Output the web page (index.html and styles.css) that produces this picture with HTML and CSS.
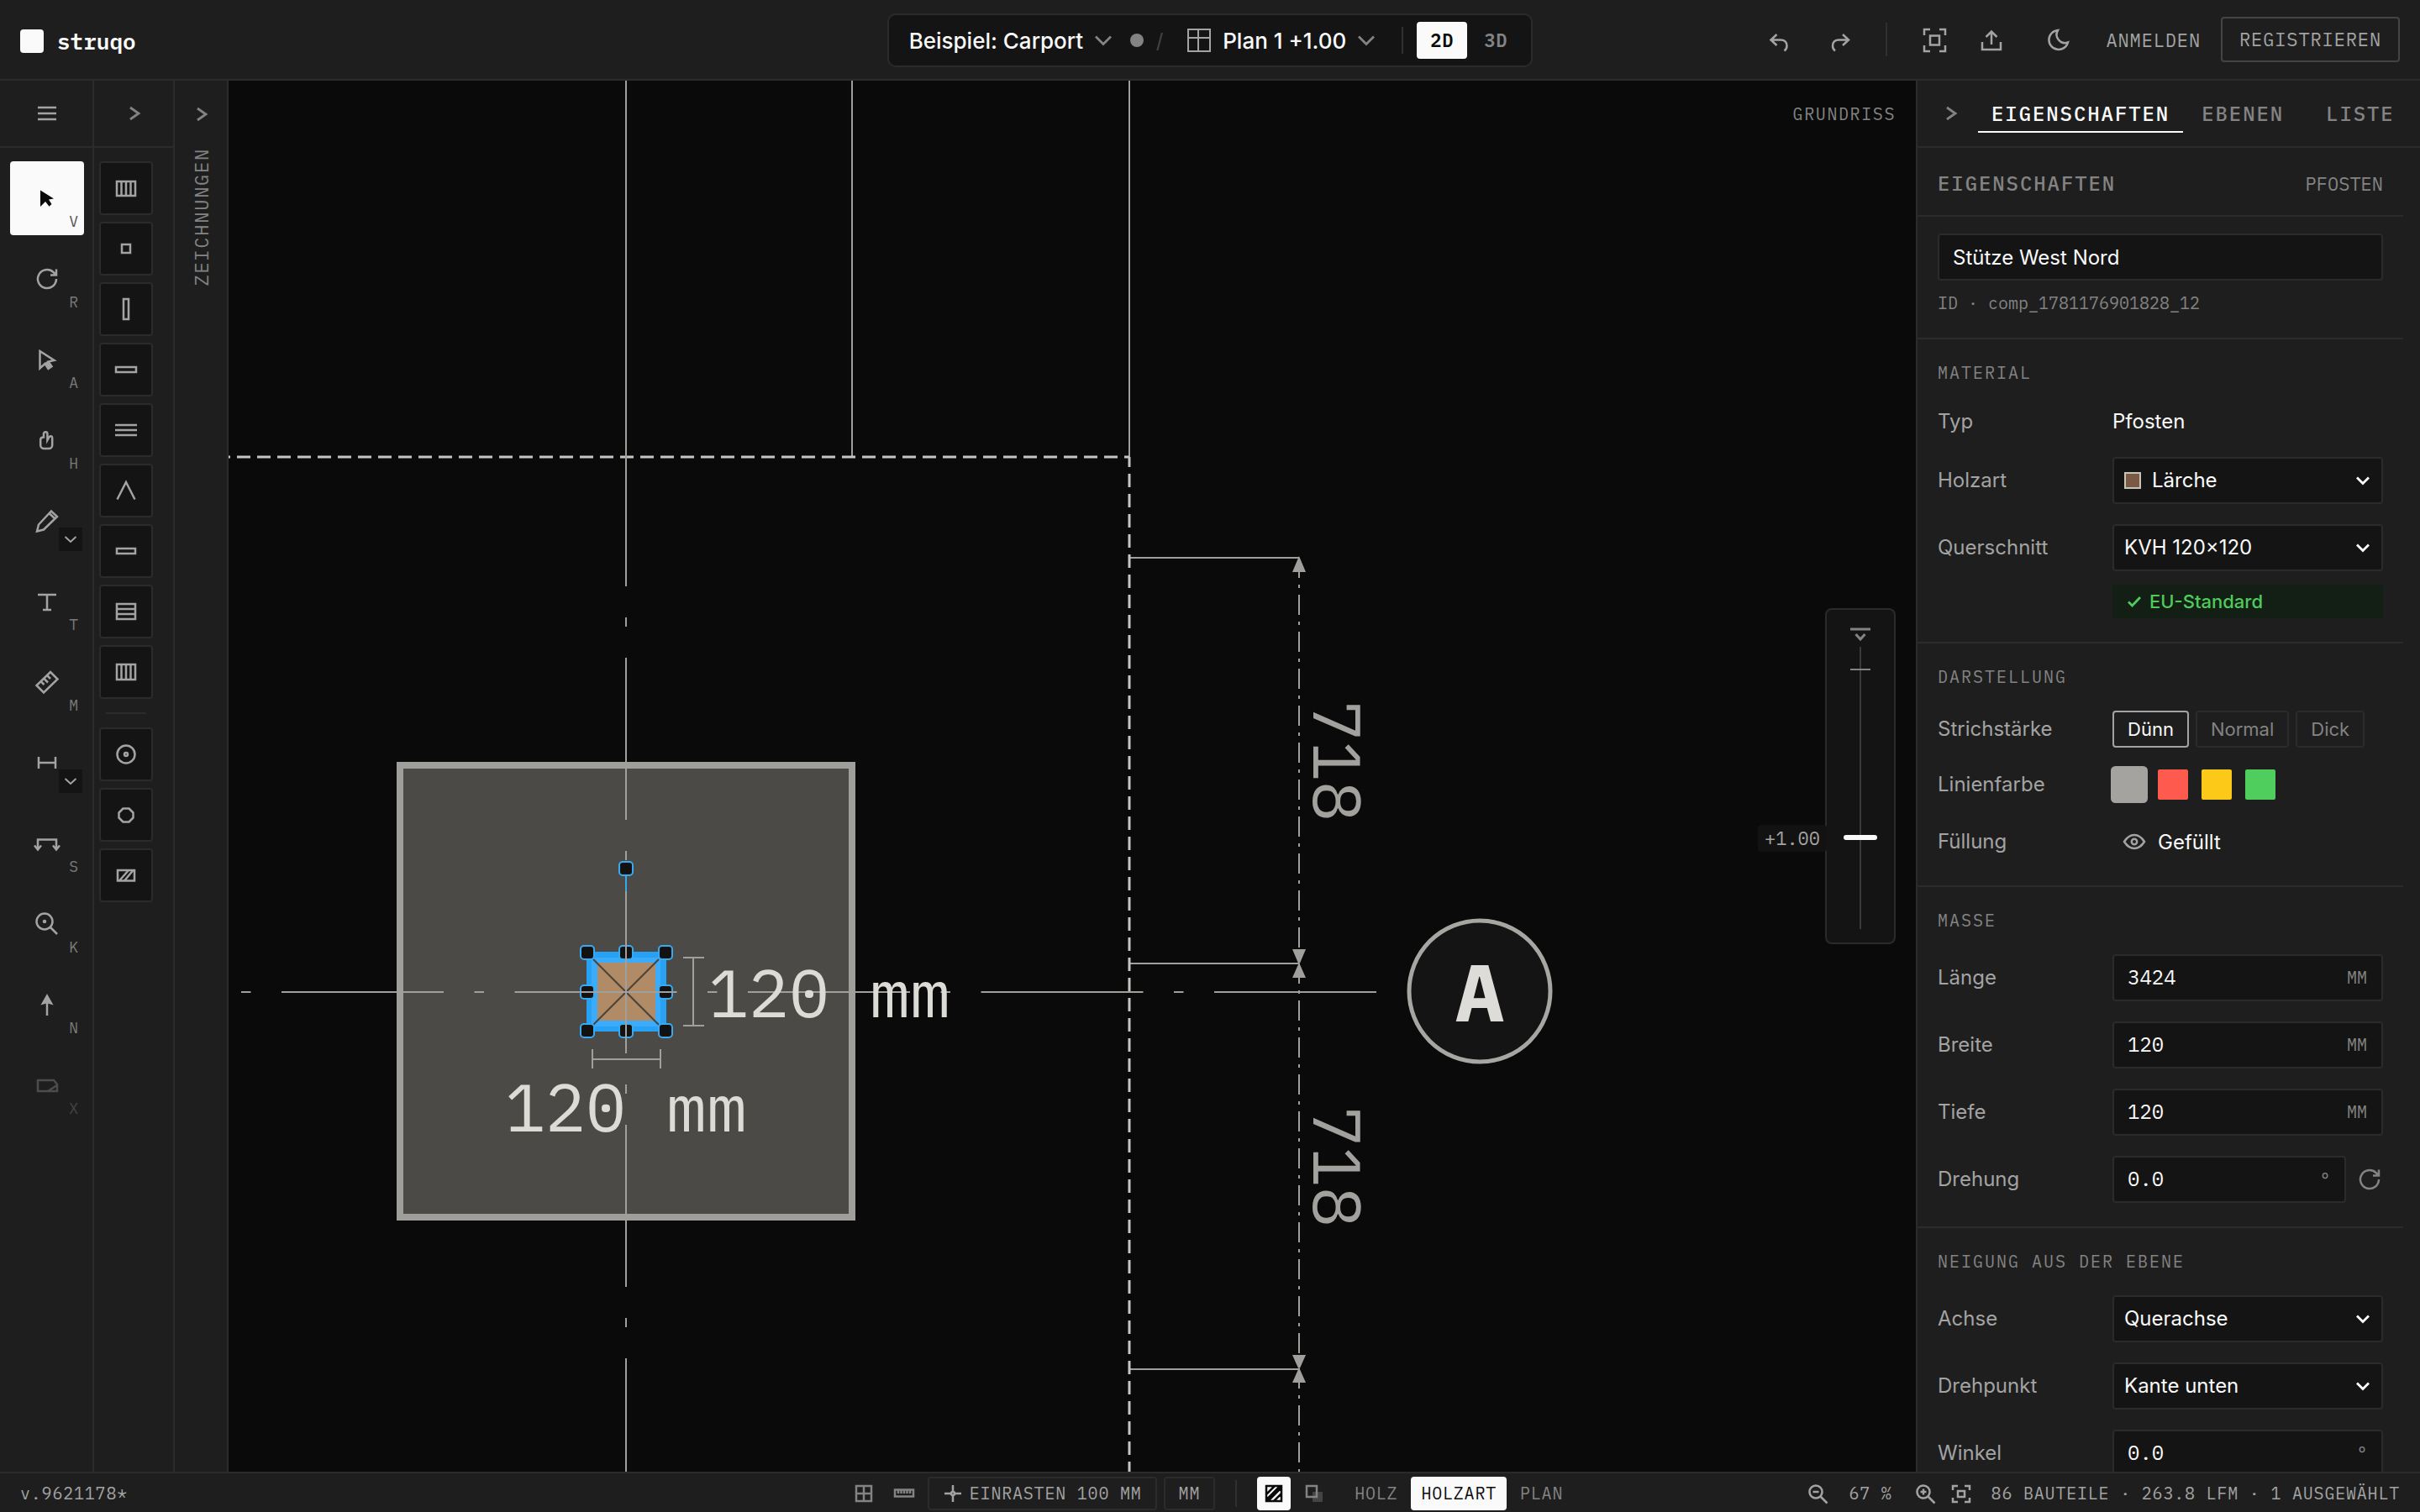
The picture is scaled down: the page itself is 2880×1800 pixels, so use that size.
FILE: index.html
```html
<!DOCTYPE html>
<html lang="de">
<head>
<meta charset="utf-8">
<title>struqo – Beispiel: Carport</title>
<link rel="stylesheet" href="styles.css">
</head>
<body>
<div class="app">
  <header class="topbar">
    <a class="brand" href="#"><span class="brand-mark"></span>struqo</a>
    <div class="project">
      <button class="project-btn" type="button">Beispiel: Carport
        <svg class="chev" viewBox="0 0 24 24"><path d="M3 7.500l9 9 9-9"/></svg></button>
      <span class="save-dot"></span>
      <span class="slash">/</span>
      <button class="project-btn" type="button">
        <svg class="icon plan-icon" viewBox="0 0 32 32"><path d="M3 3h26v26H3zM3 13h26M15 3v26"/></svg>Plan 1 +1.00
        <svg class="chev" viewBox="0 0 24 24"><path d="M3 7.500l9 9 9-9"/></svg></button>
      <span class="rule"></span>
      <div class="views">
        <button class="view-btn is-active" type="button">2D</button>
        <button class="view-btn" type="button">3D</button>
      </div>
    </div>
    <div class="actions">
      <div class="history">
        <button class="icon-btn" type="button" aria-label="Rückgängig"><svg class="icon" viewBox="0 0 32 32"><path d="M14.500 10L7.500 16.500l7 6.500M8 16.500h11c5 0 7.500 3 7.500 7 0 3-1.500 5-3 6"/></svg></button>
        <button class="icon-btn" type="button" aria-label="Wiederholen"><svg class="icon" viewBox="0 0 32 32"><path d="M19 10l7 6.500-7 6.500M25.500 16.500h-11c-5 0-7.500 3-7.500 7 0 3 1.500 5 3 6"/></svg></button>
      </div>
      <span class="rule tall"></span>
      <div class="exports">
        <button class="icon-btn" type="button" aria-label="Einpassen"><svg class="icon" viewBox="0 0 32 32"><path d="M4 11V4h7M22 4h7v7M29 23v7h-7M11 30H4v-7M11 11.500h11v11H11z"/></svg></button>
        <button class="icon-btn" type="button" aria-label="Exportieren"><svg class="icon" viewBox="0 0 32 32"><path d="M16 22V7M9.500 13L16 6.500l6.500 6.500M5 19v9h22v-9"/></svg></button>
      </div>
      <button class="icon-btn moon" type="button" aria-label="Dunkelmodus"><svg class="icon" viewBox="0 0 32 32"><path d="M27 19.500A11.500 11.500 0 1 1 15 5a10 10 0 0 0 12 14.500z"/></svg></button>
      <div class="account">
        <a class="login" href="#">ANMELDEN</a>
        <a class="register" href="#">REGISTRIEREN</a>
      </div>
    </div>
  </header>

  <main class="work">
    <nav class="rail tools">
      <div class="rail-head"><button class="rail-btn" type="button" aria-label="Menü"><svg class="icon" viewBox="0 0 32 32"><path d="M5 9h22M5 16h22M5 23h22"/></svg></button></div>
      <div class="tool-list">
        <button class="tool is-active" type="button"><svg class="icon solid" viewBox="0 0 32 32"><path d="M8 6.500L24 16.500l-6 1 3.500 5.500-3 2.800L14 20l-6 6z"/></svg><kbd>V</kbd></button>
        <button class="tool" type="button"><svg class="icon" viewBox="0 0 32 32"><path d="M27 16A11 11 0 1 1 23.500 8L27 11.500M27 4.500v7h-7"/></svg><kbd>R</kbd></button>
        <button class="tool" type="button"><svg class="icon" viewBox="0 0 32 32"><path d="M7.500 6v20.500l6-5.500 4 6 4-2.800-4-5.700 7-1.500zM15 19l5 7"/></svg><kbd>A</kbd></button>
        <button class="tool" type="button"><svg class="icon" viewBox="0 0 32 32"><path d="M12 12.500V8.500a2.200 2.200 0 0 1 4.400 0V16l2-3.500c.6-1 1.300-1.500 2.300-1.300 1 .2 1.500 1 1.500 2V22a4 4 0 0 1-4 4h-6a4 4 0 0 1-4-4v-6.500c0-2 1.500-3 3.800-3z"/></svg><kbd>H</kbd></button>
        <button class="tool" type="button"><svg class="icon" viewBox="0 0 32 32"><path d="M4 28.500l2-8L21 4.500l7 6.500-16 15.500zM18.500 7l7 6.500"/></svg><span class="more"><svg class="more-icon" viewBox="0 0 28 28"><path d="M7.500 11l6.500 6 6.500-6"/></svg></span></button>
        <button class="tool" type="button"><svg class="icon" viewBox="0 0 32 32"><path d="M5 8h22M16 8v18M11 26h10"/></svg><kbd>T</kbd></button>
        <button class="tool" type="button"><svg class="icon" viewBox="0 0 32 32"><path d="M20 4l8.500 8.500L12 28.500 3.500 20zM9 15.500l3.500 3.500M12.500 12l4.500 4.500M16.500 8.500l3.500 3.500"/></svg><kbd>M</kbd></button>
        <button class="tool" type="button"><svg class="icon" viewBox="0 0 32 32"><path d="M6 9v14M26 9v14M6 16h20"/></svg><span class="more"><svg class="more-icon" viewBox="0 0 28 28"><path d="M7.500 11l6.500 6 6.500-6"/></svg></span></button>
        <button class="tool" type="button"><svg class="icon" viewBox="0 0 32 32"><path d="M5 23V11.500h22V23M1 18.500L5 23.500l4-5M23 18.500l4 5 4-5"/></svg><kbd>S</kbd></button>
        <button class="tool" type="button"><svg class="icon" viewBox="0 0 32 32"><circle cx="13" cy="13" r="9.500"/><path d="M20 20l8 8"/><circle cx="13" cy="13" r="1"/></svg><kbd>K</kbd></button>
        <button class="tool" type="button"><svg class="icon" viewBox="0 0 32 32"><path d="M16 14v15"/><path d="M16 5.500l5 9-5-1.500-5 1.500z" fill="currentColor"/></svg><kbd>N</kbd></button>
        <button class="tool" type="button" disabled><svg class="icon" viewBox="0 0 32 32"><path d="M5 10h19l4 5v8H5zM17 23l10-6.500"/></svg><kbd>X</kbd></button>
      </div>
    </nav>

    <nav class="rail parts">
      <div class="rail-head"><button class="rail-btn" type="button" aria-label="Bauteile ausklappen"><svg class="chev" viewBox="0 0 24 24"><path d="M7 5l10 7-10 7"/></svg></button></div>
      <div class="part-list">
        <button class="part" type="button"><svg class="icon" viewBox="0 0 32 32"><path d="M5 8h22v17H5zM10.500 8v17M16 8v17M21.500 8v17"/></svg></button>
        <button class="part" type="button"><svg class="icon" viewBox="0 0 32 32"><path d="M11 11h10v10H11z"/></svg></button>
        <button class="part" type="button"><svg class="icon" viewBox="0 0 32 32"><path d="M13 4h6v24h-6z"/></svg></button>
        <button class="part" type="button"><svg class="icon" viewBox="0 0 32 32"><path d="M4 13h24v6H4z"/></svg></button>
        <button class="part" type="button"><svg class="icon" viewBox="0 0 32 32"><path d="M3 10h26M3 16h26M3 22h26"/></svg></button>
        <button class="part" type="button"><svg class="icon" viewBox="0 0 32 32"><path d="M5.500 26.500L16 6l10.500 20.500"/></svg></button>
        <button class="part" type="button"><svg class="icon" viewBox="0 0 32 32"><path d="M5 13h22v6H5z"/></svg></button>
        <button class="part" type="button"><svg class="icon" viewBox="0 0 32 32"><path d="M5 7h22v18H5zM5 13h22M5 19h22"/></svg></button>
        <button class="part" type="button"><svg class="icon" viewBox="0 0 32 32"><path d="M5 7h22v18H5zM10.500 7v18M16 7v18M21.500 7v18"/></svg></button>
        <hr class="part-rule">
        <button class="part" type="button"><svg class="icon" viewBox="0 0 32 32"><circle cx="16" cy="16" r="10.500"/><circle cx="16" cy="16" r="2"/></svg></button>
        <button class="part" type="button"><svg class="icon" viewBox="0 0 32 32"><path d="M12.500 8.500h7l5 5v6l-5 5h-7l-5-5v-6z" stroke-linejoin="round"/></svg></button>
        <button class="part" type="button"><svg class="icon" viewBox="0 0 32 32"><path d="M6 10h20v12.500H6zM8 22.500L19 10M14 22.500L24.500 10"/></svg></button>
      </div>
    </nav>

    <aside class="rail drawings">
      <button class="rail-btn drawings-btn" type="button" aria-label="Zeichnungen ausklappen"><svg class="chev" viewBox="0 0 24 24"><path d="M7 5l10 7-10 7"/></svg></button>
      <span class="drawings-label">ZEICHNUNGEN</span>
    </aside>

    <section class="canvas">
      <svg class="drawing" role="img" aria-label="Grundriss">
        <g transform="translate(-272 -96)">
          <g class="thin">
            <path d="M745 96V544M1014 96V544M1344 96V544"/>
            <path d="M1344 664H1546M1344 1147H1546M1344 1630H1546"/>
          </g>
          <path class="outline" d="M272 544H1344" stroke-dashoffset="14"/>
          <path class="outline" d="M1344 544V1760" stroke-dashoffset="4"/>
          <g class="chain"><path d="M1546 664V1147"/><path d="M1546 1147V1629"/><path d="M1546 1629V1760"/></g>
          <path class="arrows" d="M1546 662l8 19h-16zM1546 1149l8-19h-16zM1546 1146l8 18h-16zM1546 1631l8-18h-16zM1546 1628l8 18h-16z"/>
          <rect class="footing" x="476" y="911" width="538" height="538"/>
          <path class="link" d="M745 1034V1134"/>
          <rect x="698" y="1133" width="95" height="95" fill="#27a1f3"/>
          <rect x="704" y="1140" width="82" height="82" fill="#3cabfa"/>
          <rect x="711" y="1146" width="69" height="69" fill="#b08b66"/>
          <path class="cross" d="M706 1142L784 1220M784 1142L706 1220"/>
          <g class="handles">
            <rect x="737" y="1026" width="16" height="16" rx="4"/>
            <rect x="691" y="1126" width="16" height="16" rx="4"/><rect x="737" y="1126" width="16" height="16" rx="4"/><rect x="784" y="1126" width="16" height="16" rx="4"/>
            <rect x="691" y="1173" width="16" height="16" rx="4"/><rect x="784" y="1173" width="16" height="16" rx="4"/>
            <rect x="691" y="1219" width="16" height="16" rx="4"/><rect x="737" y="1219" width="16" height="16" rx="4"/><rect x="784" y="1219" width="16" height="16" rx="4"/>
          </g>
          <path class="axis" d="M745 505V1760"/>
          <path class="axis cross-axis" d="M1638 1181H286"/>
          <path class="thin" d="M813 1140H838M813 1221H838M825 1140V1221M705 1249V1272M786 1249V1272M705 1261H786"/>
          <text class="size" x="843" y="1211">120 mm</text>
          <text class="size" x="745" y="1347" text-anchor="middle">120 mm</text>
          <text class="dim" transform="translate(1563 906) rotate(90)" text-anchor="middle">718</text>
          <text class="dim" transform="translate(1563 1389) rotate(90)" text-anchor="middle">718</text>
          <circle class="bubble" cx="1761" cy="1180" r="84"/>
          <text class="axis-name" x="1761" y="1216" text-anchor="middle">A</text>
        </g>
      </svg>
      <span class="canvas-title">GRUNDRISS</span>
      <div class="level">
        <output class="level-value" for="level">+1.00</output>
        <div class="level-panel">
          <svg class="level-top" viewBox="0 0 24 24"><path d="M0 5h24" stroke-width="3"/><path d="M6.500 11l5.500 6 5.500-6" stroke-width="3"/></svg>
          <input id="level" class="level-range" type="range" min="0" max="100" value="32" aria-label="Schnitthöhe">
        </div>
      </div>
    </section>

    <aside class="panel">
      <div class="tabs">
        <button class="rail-btn tabs-toggle" type="button" aria-label="Panel einklappen"><svg class="chev" viewBox="0 0 24 24"><path d="M7 5l10 7-10 7"/></svg></button>
        <button class="tab is-active" type="button">EIGENSCHAFTEN</button>
        <button class="tab" type="button">EBENEN</button>
        <button class="tab" type="button">LISTE</button>
      </div>
      <div class="panel-body">
        <div class="panel-title"><h2>EIGENSCHAFTEN</h2><span>PFOSTEN</span></div>
        <div class="identity">
          <input class="field" type="text" value="Stütze West Nord" aria-label="Name">
          <p>ID · comp_1781176901828_12</p>
        </div>

        <section class="group">
          <h3>MATERIAL</h3>
          <div class="row typ"><span class="label">Typ</span><span class="value">Pfosten</span></div>
          <div class="row"><label class="label" for="wood">Holzart</label>
            <div class="select has-swatch"><span class="wood-swatch"></span><select id="wood"><option>Lärche</option></select><svg class="caret" viewBox="0 0 20 20"><path d="M3 6.500l7 7 7-7"/></svg></div></div>
          <div class="row"><label class="label" for="profile">Querschnitt</label>
            <div class="select"><select id="profile"><option>KVH 120×120</option></select><svg class="caret" viewBox="0 0 20 20"><path d="M3 6.500l7 7 7-7"/></svg></div></div>
          <div class="row badge-row"><span class="badge"><svg class="check" viewBox="0 0 20 20"><path d="M3 10.500l4.500 4.500L17 5"/></svg>EU-Standard</span></div>
        </section>

        <section class="group">
          <h3>DARSTELLUNG</h3>
          <div class="row"><span class="label">Strichstärke</span>
            <div class="weights"><button class="weight is-active" type="button">Dünn</button><button class="weight" type="button">Normal</button><button class="weight" type="button">Dick</button></div></div>
          <div class="row colors-row"><span class="label">Linienfarbe</span>
            <div class="colors"><button class="color grey is-active" type="button" aria-label="Grau"></button><button class="color red" type="button" aria-label="Rot"></button><button class="color yellow" type="button" aria-label="Gelb"></button><button class="color green" type="button" aria-label="Grün"></button></div></div>
          <div class="row fill-row"><span class="label">Füllung</span>
            <button class="fill" type="button"><svg class="icon" viewBox="0 0 32 32"><path d="M4 16c3.500-5.500 7.500-8 12-8s8.500 2.500 12 8c-3.500 5.500-7.500 8-12 8s-8.500-2.500-12-8z"/><circle cx="16" cy="16" r="3.200"/></svg>Gefüllt</button></div>
        </section>

        <section class="group">
          <h3>MASSE</h3>
          <div class="row"><label class="label" for="len">Länge</label><div class="number"><input id="len" type="text" value="3424"><span>MM</span></div></div>
          <div class="row"><label class="label" for="wid">Breite</label><div class="number"><input id="wid" type="text" value="120"><span>MM</span></div></div>
          <div class="row"><label class="label" for="dep">Tiefe</label><div class="number"><input id="dep" type="text" value="120"><span>MM</span></div></div>
          <div class="row"><label class="label" for="rot">Drehung</label>
            <div class="rotation"><div class="number"><input id="rot" type="text" value="0.0"><span>°</span></div>
            <button class="reset" type="button" aria-label="Um 90° drehen"><svg class="icon" viewBox="0 0 32 32"><path d="M27 16A11 11 0 1 1 23.500 8L27 11.500M27 4.500v7h-7"/></svg></button></div></div>
        </section>

        <section class="group">
          <h3>NEIGUNG AUS DER EBENE</h3>
          <div class="row"><label class="label" for="axis">Achse</label><div class="select"><select id="axis"><option>Querachse</option></select><svg class="caret" viewBox="0 0 20 20"><path d="M3 6.500l7 7 7-7"/></svg></div></div>
          <div class="row"><label class="label" for="pivot">Drehpunkt</label><div class="select"><select id="pivot"><option>Kante unten</option></select><svg class="caret" viewBox="0 0 20 20"><path d="M3 6.500l7 7 7-7"/></svg></div></div>
          <div class="row"><label class="label" for="angle">Winkel</label><div class="number"><input id="angle" type="text" value="0.0"><span>°</span></div></div>
        </section>
      </div>
    </aside>
  </main>

  <footer class="status">
    <span>v.9621178*</span>
    <div class="status-mid">
      <button class="st-icon" type="button" aria-label="Raster"><svg class="icon" viewBox="0 0 32 32"><path d="M7 7h18v18H7zM7 16h18M16 7v18"/></svg></button>
      <button class="st-icon" type="button" aria-label="Lineal"><svg class="icon" viewBox="0 0 32 32"><path d="M5 11.500h22v8H5zM9 11v5M12.500 11v5M16 11v5M19.500 11v5M23 11v5"/></svg></button>
      <button class="st-box snap" type="button"><svg class="icon" viewBox="0 0 32 32"><path d="M6 16h7M19 16h7M16 6v7M16 19v7"/><circle cx="16" cy="16" r="2"/></svg>EINRASTEN 100 MM</button>
      <button class="st-box" type="button">MM</button>
      <span class="rule st-rule"></span>
      <button class="st-icon is-active" type="button" aria-label="Schraffur"><svg class="icon" viewBox="0 0 32 32"><path d="M7 7h18v18H7zM7 17L17 7M7 23.500L23.500 7M9 25L25 9M16 25l9-9"/></svg></button>
      <button class="st-icon" type="button" aria-label="Überlagerung"><svg class="icon" viewBox="0 0 32 32"><path d="M14 14h12v12H14z" fill="#444" stroke="none"/><path d="M7 7h12v13H7z"/></svg></button>
      <div class="modes"><button class="mode" type="button">HOLZ</button><button class="mode is-active" type="button">HOLZART</button><button class="mode" type="button">PLAN</button></div>
    </div>
    <div class="status-right">
      <button class="st-zoom" type="button" aria-label="Verkleinern"><svg class="icon" viewBox="0 0 32 32"><circle cx="13" cy="14" r="7.500"/><path d="M18.500 19.500l8 8M9.500 14h7"/></svg></button>
      <span class="zoom-value">67 %</span>
      <button class="st-zoom" type="button" aria-label="Vergrößern"><svg class="icon" viewBox="0 0 32 32"><circle cx="13" cy="14" r="7.500"/><path d="M18.500 19.500l8 8M9.500 14h7M13 10.500v7"/></svg></button>
      <button class="st-zoom fit" type="button" aria-label="Alles zeigen"><svg class="icon" viewBox="0 0 32 32"><path d="M6 12V7h6M20 7h6v5M26 21v5h-6M12 26H6v-5M12 13h8v7h-8z"/></svg></button>
      <span>86 BAUTEILE · 263.8 LFM · 1 AUSGEWÄHLT</span>
    </div>
  </footer>
</div>
</body>
</html>
```

FILE: styles.css
```css
:root {
  --bg: #0a0a0a;
  --surface: #1e1e1e;
  --field: #141414;
  --line: #2b2b2b;
  --muted: #838383;
  --soft: #a3a3a3;
  --white: #fafafa;
  --mono: "IBM Plex Mono", "Liberation Mono", monospace;
  --sans: Inter, "Liberation Sans", sans-serif;
}
* { box-sizing: border-box; }
body { margin: 0; background: var(--bg); color: var(--soft); font-family: var(--sans); font-size: 24px; }
button, input, select, kbd { font: inherit; color: inherit; }
button { margin: 0; padding: 0; border: 0; background: none; letter-spacing: inherit; }
a { color: inherit; text-decoration: none; }
h2, h3, p { margin: 0; font-weight: 400; }
svg { display: block; flex: none; fill: none; stroke: currentColor; stroke-width: 2; }
.icon { width: 32px; height: 32px; stroke-width: 2.500; }
.icon.solid { fill: currentColor; stroke: none; }
.chev { width: 24px; height: 24px; stroke-width: 2.800; }
.rule { width: 2px; height: 32px; background: #303030; }

.app { display: flex; flex-direction: column; height: 100vh; overflow: hidden; }

/* Top bar */
.topbar { flex: none; display: grid; grid-template-columns: 1fr auto 1fr; align-items: center; height: 96px; padding: 0 24px; background: var(--surface); border-bottom: 2px solid var(--line); }
.brand { display: flex; align-items: center; gap: 16px; padding-top: 4px; color: var(--white); font: 600 26px/32px var(--mono); }
.brand-mark { width: 28px; height: 28px; border-radius: 4px; background: var(--white); }
.project { display: flex; align-items: center; height: 64px; margin-top: 2px; padding: 0 12px 0 24px; background: var(--field); border: 2px solid var(--line); border-radius: 10px; }
.project-btn { display: flex; align-items: center; gap: 12px; color: var(--white); font-weight: 500; font-size: 26px; }
.project-btn svg { color: var(--muted); }
.project-btn .plan-icon { color: var(--soft); stroke-width: 2; }
.save-dot { width: 16px; height: 16px; margin: 0 12px 0 20px; border-radius: 50%; background: var(--muted); }
.slash { width: 14px; margin-right: 24px; color: #444; text-align: center; }
.project .rule { margin: 0 16px 0 30px; }
.views { display: flex; gap: 4px; }
.view-btn { width: 60px; height: 44px; border-radius: 4px; color: var(--muted); font: 600 22px/44px var(--mono); letter-spacing: 1px; }
.view-btn.is-active { background: var(--white); color: var(--bg); }
.actions { display: flex; align-items: center; justify-content: flex-end; font-family: var(--mono); font-size: 22px; letter-spacing: 0.04em; }
.history { display: flex; gap: 10px; margin-right: 22px; }
.exports { display: flex; gap: 4px; margin: 0 16px 0 24px; }
.icon-btn { display: flex; align-items: center; justify-content: center; width: 64px; height: 64px; }
.rule.tall { height: 40px; }
.account { display: flex; align-items: center; gap: 24px; margin-left: 24px; }
.register { padding: 0 20px; border: 2px solid #444; border-radius: 4px; line-height: 50px; }

/* Left rails */
.work { flex: 1; display: flex; min-height: 0; }
.rail { flex: none; background: var(--surface); border-right: 2px solid var(--line); }
.rail-head { display: flex; align-items: center; justify-content: center; height: 80px; padding-left: 2px; border-bottom: 2px solid var(--line); }
.tools { width: 112px; }
.parts { width: 96px; }
.drawings { display: flex; flex-direction: column; align-items: center; width: 64px; padding-left: 2px; }
.rail-btn { display: flex; align-items: center; justify-content: center; width: 48px; height: 48px; color: var(--muted); }
.tools .rail-btn { color: var(--soft); }
.tool-list { display: flex; flex-direction: column; gap: 8px; padding: 16px 10px 16px 12px; }
.tool { position: relative; display: flex; align-items: center; justify-content: center; height: 88px; border-radius: 4px; }
.tool.is-active { background: var(--white); color: var(--bg); }
.tool:disabled { color: #4c4c4c; }
.tool kbd { position: absolute; right: 7px; bottom: 6px; color: #7a7a7a; font: 18px/20px var(--mono); }
.tool.is-active kbd { color: #555; }
.tool:disabled kbd { color: #444; }
.more { position: absolute; right: 2px; bottom: 8px; background: var(--field); }
.more-icon { width: 28px; height: 28px; }
.part-list { display: flex; flex-direction: column; gap: 8px; padding: 16px 6px; }
.part { display: flex; align-items: center; justify-content: center; width: 64px; height: 64px; background: var(--field); border: 2px solid var(--line); border-radius: 4px; }
.part-rule { width: 48px; height: 2px; margin: 8px; border: 0; background: var(--line); }
.drawings-btn { height: 80px; }
.drawings-label { color: var(--muted); font: 22px/24px var(--mono); letter-spacing: 0.08em; writing-mode: vertical-rl; transform: rotate(180deg); }

/* Drawing area */
.canvas { position: relative; flex: 1; min-width: 0; overflow: hidden; background: var(--bg); }
.drawing { position: absolute; inset: 0; width: 100%; height: 100%; }
.thin, .axis { stroke: #a19f9c; stroke-width: 2; }
.outline { stroke: #c9c6c1; stroke-width: 3; stroke-dasharray: 16 8; }
.chain { stroke: #a19f9c; stroke-width: 2; stroke-dasharray: 24 8 4 8; }
.arrows { fill: #a19f9c; stroke: none; }
.footing { fill: #4b4a47; }
.link { stroke: #38a8ee; stroke-width: 2; }
.drawing rect { stroke: none; }
.drawing .footing { stroke: #a09e9a; stroke-width: 8; }
.cross { stroke: #4c443c; stroke-width: 2; }
.drawing .handles rect { fill: #121212; stroke: #3aaaf0; stroke-width: 2; }
.axis { stroke-dasharray: 193 37 11 37; }
.cross-axis { stroke-dasharray: 193 36.500 11.500 36.500; }
.drawing text { stroke: none; font-family: var(--mono); font-size: 80px; }
.size { fill: #dddbd6; }
.dim { fill: #a3a19e; }
.bubble { fill: var(--field); stroke: #a8a6a3; stroke-width: 5; }
.drawing .axis-name { fill: #dedcd8; font-size: 96px; font-weight: 700; }
.canvas-title { position: absolute; top: 28px; right: 24px; color: var(--muted); font: 20px/24px var(--mono); letter-spacing: 0.08em; }
.level { position: absolute; top: 628px; right: 24px; }
.level-panel { display: flex; flex-direction: column; align-items: center; gap: 2px; width: 84px; height: 400px; padding-top: 18px; background: var(--field); border: 2px solid var(--line); border-radius: 8px; }
.level-top { width: 24px; height: 24px; color: var(--muted); }
.level-range { width: 40px; height: 336px; margin: 0; appearance: none; writing-mode: vertical-lr; direction: rtl; background: linear-gradient(var(--muted), var(--muted)) 50% 26px / 24px 2px no-repeat, linear-gradient(#3a3a3a, #3a3a3a) 50% 0 / 2px 100% no-repeat; }
.level-range::-webkit-slider-thumb { appearance: none; width: 40px; height: 6px; border-radius: 3px; background: var(--white); }
.level-value { position: absolute; top: 258px; right: 82px; padding: 0 8px; border-radius: 4px; background: #121212; font: 22px/32px var(--mono); z-index: 1; }

/* Properties panel */
.panel { flex: none; display: flex; flex-direction: column; width: 600px; background: var(--surface); border-left: 2px solid var(--line); }
.tabs { flex: none; display: flex; align-items: center; height: 80px; padding-left: 16px; border-bottom: 2px solid var(--line); font-family: var(--mono); font-weight: 500; letter-spacing: 0.08em; }
.tabs-toggle { margin-right: 8px; }
.tab { height: 46px; padding: 2px 16px 0; border-bottom: 2px solid transparent; color: var(--muted); }
.tab + .tab { margin-left: 6px; }
.tab + .tab + .tab { margin-left: 18px; }
.tab.is-active { border-color: var(--white); color: var(--white); }
.panel-body { flex: 1; min-height: 0; margin-right: 20px; overflow: hidden auto; scrollbar-width: none; }
.panel-title { display: flex; align-items: center; justify-content: space-between; height: 82px; padding: 4px 24px 0; border-bottom: 2px solid var(--line); color: var(--muted); font-family: var(--mono); font-size: 22px; }
.panel-title h2 { font-size: 24px; font-weight: 500; letter-spacing: 0.08em; }
.identity { padding: 20px 24px 26px; }
.identity p { margin-top: 12px; color: var(--muted); font: 20px/30px var(--mono); }
.field, .number, .select select { width: 100%; height: 56px; background: var(--field); border: 2px solid var(--line); border-radius: 4px; }
.field { display: block; padding: 0 16px; color: var(--white); }
.group { display: flex; flex-direction: column; gap: 24px; padding: 24px 24px 28px; border-top: 2px solid var(--line); }
.group h3 { color: var(--muted); font: 20px/32px var(--mono); letter-spacing: 0.1em; }
.row { display: grid; grid-template-columns: 208px minmax(0, 1fr); align-items: center; }
.label, .value { padding-bottom: 2px; }
.typ { height: 36px; }
.value { color: var(--white); }
.select { position: relative; }
.select select { display: block; padding: 0 12px 2px; color: var(--white); appearance: none; }
.has-swatch select { padding-left: 45px; }
.wood-swatch { position: absolute; left: 14px; top: 18px; width: 20px; height: 20px; background: #7a5a45; border: 2px solid #c9c4b8; }
.caret { position: absolute; right: 14px; top: 18px; width: 20px; height: 20px; color: var(--white); stroke-width: 2.800; }
.badge-row { margin-top: -8px; }
.badge { grid-column: 2; display: flex; align-items: center; gap: 8px; height: 40px; padding-left: 16px; background: #131e14; color: #4ecb5c; font-size: 22px; font-weight: 500; }
.check { width: 20px; height: 20px; stroke-width: 2.800; }
.weights { display: flex; gap: 8px; }
.weight { height: 44px; padding: 0 16px; border: 2px solid var(--line); border-radius: 4px; color: var(--muted); font-size: 22px; }
.weight.is-active { border-color: var(--soft); color: var(--white); }
.colors-row { height: 40px; }
.colors { display: flex; gap: 16px; padding-left: 2px; }
.color { width: 36px; height: 36px; border-radius: 2px; }
.color.is-active { box-shadow: 0 0 0 4px #a5a3a0; }
.grey { background: #a5a3a0; }
.red { background: #ff5a4e; }
.yellow { background: #fcc918; }
.green { background: #4fcd5d; }
.fill-row { height: 48px; }
.fill { display: flex; align-items: center; gap: 12px; padding-left: 10px; color: var(--white); }
.fill svg { color: var(--soft); }
.number { display: flex; align-items: center; min-width: 0; padding: 0 17px 2px 16px; font-family: var(--mono); }
.number input { flex: 1; width: 0; min-width: 0; padding: 0; border: 0; background: none; color: var(--white); outline: 0; }
.number span { color: var(--muted); font-size: 20px; }
.rotation { display: flex; align-items: center; gap: 12px; }
.reset { flex: none; color: var(--muted); }

/* Status bar */
.status { flex: none; display: grid; grid-template-columns: 1fr auto 1fr; align-items: center; height: 48px; padding: 2px 24px 0; background: var(--surface); border-top: 2px solid var(--line); font: 20px/24px var(--mono); letter-spacing: 0.04em; }
.status-mid { display: flex; align-items: center; gap: 8px; }
.st-icon { display: flex; align-items: center; justify-content: center; width: 40px; height: 40px; border-radius: 4px; color: var(--muted); }
.is-active.st-icon, .mode.is-active { background: var(--white); color: var(--bg); }
.st-box { display: flex; align-items: center; gap: 4px; height: 40px; padding: 0 16px; border: 2px solid var(--line); border-radius: 4px; }
.snap { padding-left: 12px; }
.st-rule { margin: 0 16px; }
.modes { display: flex; gap: 4px; margin-left: 8px; }
.mode { height: 40px; padding: 0 12px; border-radius: 4px; color: var(--muted); }
.status-right { display: flex; align-items: center; justify-content: flex-end; }
.zoom-value { margin: 0 24px 0 20px; }
.fit { margin: 0 20px 0 10px; }
```
